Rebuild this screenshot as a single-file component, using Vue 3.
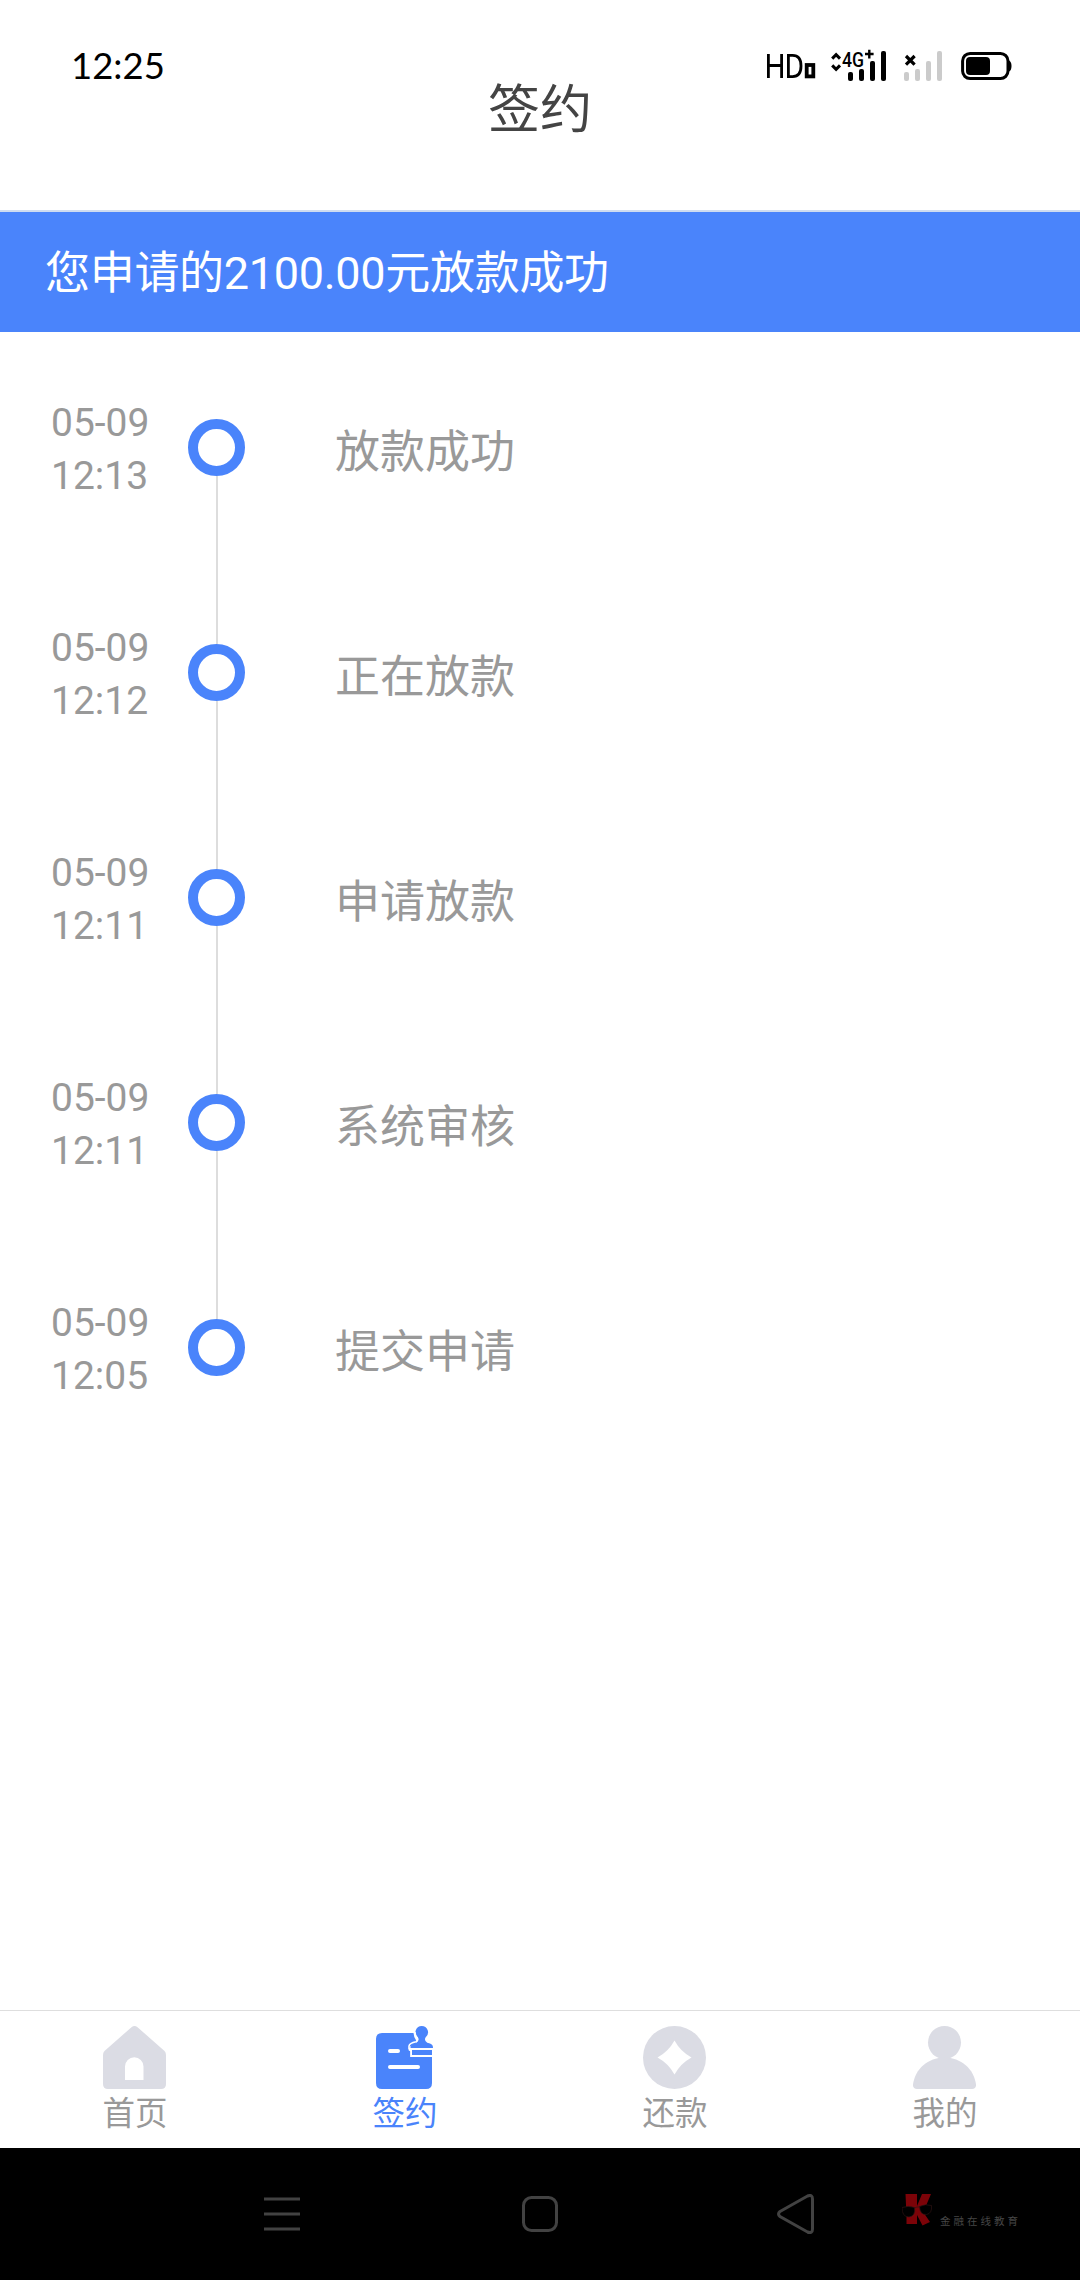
<script setup>
const steps = [
  { date: '05-09', time: '12:13', label: '放款成功' },
  { date: '05-09', time: '12:12', label: '正在放款' },
  { date: '05-09', time: '12:11', label: '申请放款' },
  { date: '05-09', time: '12:11', label: '系统审核' },
  { date: '05-09', time: '12:05', label: '提交申请' },
]
</script>

<template>
  <div class="screen">
    <header class="top">
      <div class="status">
        <span class="clock">12:25</span>
        <svg class="indicators" width="260" height="40" viewBox="0 0 260 40">
          <g fill="none" stroke="#000" stroke-width="2.8">
            <path d="M8.400 9v24M21.600 9v24M8.400 20.500h13.200" />
            <path d="M28.400 10.400v21.200h4.200q8.400 0 8.400-10.600t-8.400-10.600z" />
            <rect x="46.700" y="20" width="6.600" height="11.400" stroke-width="3.800" />
            <path d="M72.200 13.600l3.900-4 3.900 4M72.200 20.400l3.900 4 3.900-4" stroke-width="3" />
            <path d="M105 9h8.600M109.300 4.800v8.600" stroke-width="2.400" />
            <path d="M146 11l8.600 8.600M154.600 11L146 19.600" stroke-width="3.200" />
          </g>
          <text x="82" y="21.500" class="network" textLength="22" lengthAdjust="spacingAndGlyphs">4G</text>
          <g fill="#000">
            <rect x="88" y="27" width="5" height="9" rx="2" />
            <rect x="99" y="24" width="5" height="12" rx="2" />
            <rect x="110" y="16" width="5" height="20" rx="2" />
            <rect x="121" y="6" width="5" height="30" rx="2" />
          </g>
          <g fill="#cbcbcb">
            <rect x="144" y="27" width="5" height="9" rx="2" />
            <rect x="155" y="24" width="5" height="12" rx="2" />
            <rect x="166" y="16" width="5" height="20" rx="2" />
            <rect x="177" y="6" width="5" height="30" rx="2" />
          </g>
          <rect x="202.600" y="8.400" width="45.400" height="25.200" rx="7.500" fill="none" stroke="#000" stroke-width="3" />
          <rect x="206" y="12" width="24" height="18" rx="4" />
          <path d="M248.500 15.500q3 .5 3 5.500t-3 5.500z" />
        </svg>
      </div>
      <h1 class="title">签约</h1>
    </header>

    <div class="banner">您申请的2100.00元放款成功</div>

    <main class="timeline">
      <div v-for="(step, i) in steps" :key="i" class="step">
        <div class="when">
          <div>{{ step.date }}</div>
          <div>{{ step.time }}</div>
        </div>
        <div class="track">
          <div class="ring"></div>
          <div v-if="i < steps.length - 1" class="line"></div>
        </div>
        <div class="label">{{ step.label }}</div>
      </div>
    </main>

    <nav class="tabs">
      <div class="tab">
        <svg width="63" height="63" viewBox="0 0 63 63">
          <path fill="#dbdce4" fill-rule="evenodd" d="M28.500 1.200q3-2.400 6 0L61.500 25q1.500 1.500 1.500 4v29q0 5-5 5H5q-5 0-5-5V29q0-2.500 1.500-4zM22 54h18.500V40.500a9.250 9.250 0 0 0-18.500 0z" />
        </svg>
        <span>首页</span>
      </div>
      <div class="tab active">
        <svg width="63" height="63" viewBox="0 0 63 63">
          <path fill="#4a84fb" d="M9 7h31.500q.3 4.500 2.700 7.500 1 2-1.500 3.500-6 1.500-6 6.500l2 1v5.500h21.300v26q0 6-6 6H9q-6 0-6-6V13q0-6 6-6z" />
          <path fill="#4a84fb" d="M48.700 0a6.300 6.300 0 0 1 4.200 11q-1.700 2-.2 4.300 1 1.600 4.300 2.300 3 1 3 4.400H37.500q0-3.400 3-4.400 3.300-.7 4.300-2.300 1.500-2.300-.2-4.300A6.300 6.300 0 0 1 48.700 0z" />
          <rect x="39" y="24" width="20" height="5" fill="#4a84fb" />
          <g fill="none" stroke="#fff" stroke-width="1.600">
            <path d="M42 6q0 4 2.200 6 .9 2.300-1.200 3.800-6.500 1.200-7 4.400v2.600H60M38 23v7.200h22" />
          </g>
          <path d="M17 25h8M17 41h28" stroke="#fff" stroke-width="4" stroke-linecap="round" />
        </svg>
        <span>签约</span>
      </div>
      <div class="tab">
        <svg width="63" height="63" viewBox="0 0 63 63">
          <circle cx="31.500" cy="31.500" r="31.500" fill="#dbdce4" />
          <path fill="#fff" d="M31.500 14.500Q37.500 25.500 48.500 31.500 37.500 37.500 31.500 48.500 25.500 37.500 14.500 31.500 25.500 25.500 31.500 14.500z" />
        </svg>
        <span>还款</span>
      </div>
      <div class="tab">
        <svg width="63" height="63" viewBox="0 0 63 63" fill="#dbdce4">
          <circle cx="31.500" cy="16.500" r="16.500" />
          <path d="M31.500 31.500C48 31.500 61 43 63 58.500q.3 4.500-4 4.500H4q-4.300 0-4-4.500C2 43 15 31.500 31.500 31.500z" />
        </svg>
        <span>我的</span>
      </div>
    </nav>

    <footer class="system">
      <svg class="menu" width="36" height="34" viewBox="0 0 36 34">
        <path d="M0 2h36M0 17h36M0 32h36" stroke="#424242" stroke-width="3" />
      </svg>
      <svg class="home" width="36" height="36" viewBox="0 0 36 36">
        <rect x="1.500" y="1.500" width="33" height="33" rx="8" fill="none" stroke="#424242" stroke-width="3" />
      </svg>
      <svg class="back" width="38" height="40" viewBox="0 0 38 40">
        <path d="M3 17.500L30.500 2Q35.500 0 35.500 5v30q0 5-5 3L3 22.500q-3-2.500 0-5z" fill="none" stroke="#424242" stroke-width="3" />
      </svg>
      <div class="brand">
        <svg width="32" height="34" viewBox="0 0 32 34">
          <path fill="#7c0308" d="M3.500 1H15v12L20 1h9l-5.500 13-3 4L28 29l-7.500 3.500L15 22v9H4.500V23z" />
          <g fill="#000" stroke="#2d1212" stroke-width=".7">
            <path d="M0 14.500q6.500-2.200 12.500 0 1.300 8.500-5.500 9.500Q0 24 0 14.500z" />
            <path d="M17.500 13.500q6-3 12-1 .8 8-5 9-6.500.5-7-8z" />
            <path d="M12.500 15q2.500-1.500 5-1" fill="none" />
          </g>
        </svg>
        <span>金融在线教育</span>
      </div>
    </footer>
  </div>
</template>

<style>
body {
  margin: 0;
}
</style>

<style scoped>
.screen {
  width: 1080px;
  height: 2280px;
  display: flex;
  flex-direction: column;
  background: #fff;
  overflow: hidden;
  font-family: Roboto, "Noto Sans CJK SC", sans-serif;
}
.top {
  height: 210px;
  flex: none;
  box-sizing: border-box;
  padding-top: 45px;
}
.status {
  height: 40px;
  display: flex;
  justify-content: space-between;
  padding: 0 60px 0 71px;
}
.clock {
  font: 36.500px/40px Lato, sans-serif;
  color: #000;
}
.indicators {
  flex: none;
}
.network {
  font: 500 20px Roboto, sans-serif;
}
.title {
  margin: -8px 0 0;
  text-align: center;
  font-weight: 400;
  font-size: 52px;
  line-height: 68px;
  color: #444;
}
.banner {
  height: 122px;
  box-sizing: border-box;
  flex: none;
  border-top: 2px solid #cfdcf0;
  padding-left: 45px;
  background: #4a84fb;
  color: #fff;
  font-size: 45px;
  line-height: 124px;
  letter-spacing: -0.3px;
}
.timeline {
  flex: 1;
  padding-top: 87px;
}
.step {
  height: 225px;
  display: flex;
  align-items: flex-start;
}
.when {
  width: 137px;
  padding-left: 51px;
  margin-top: -22px;
  font-size: 39px;
  line-height: 53px;
  color: #999;
}
.track {
  width: 57px;
  height: 225px;
  display: flex;
  flex-direction: column;
  align-items: center;
}
.ring {
  width: 57px;
  height: 57px;
  flex: none;
  box-sizing: border-box;
  border: 10px solid #4a84fb;
  border-radius: 50%;
}
.line {
  width: 2px;
  flex: 1;
  background: #ddd;
}
.label {
  margin: 4px 0 0 90px;
  font-size: 45px;
  line-height: 60px;
  color: #999;
}
.tabs {
  height: 138px;
  box-sizing: border-box;
  flex: none;
  display: flex;
  border-top: 1px solid #dedede;
}
.tab {
  flex: 1;
  display: flex;
  flex-direction: column;
  align-items: center;
  padding-top: 15px;
  font-size: 32.500px;
  line-height: 44px;
  color: #999;
}
.tab svg {
  margin-right: 1px;
}
.tab span {
  margin-top: 3px;
}
.tab.active {
  color: #4a84fb;
}
.system {
  height: 132px;
  flex: none;
  display: flex;
  align-items: center;
  background: #000;
}
.menu {
  margin-left: 264px;
}
.home {
  margin-left: 222px;
}
.back {
  margin-left: 219px;
}
.brand {
  display: flex;
  align-items: flex-end;
  margin-left: 87px;
  margin-top: -8px;
}
.brand span {
  margin: 0 0 -2px 6px;
  font-size: 10.500px;
  line-height: 14px;
  letter-spacing: 3px;
  color: #464646;
  white-space: nowrap;
}
</style>
